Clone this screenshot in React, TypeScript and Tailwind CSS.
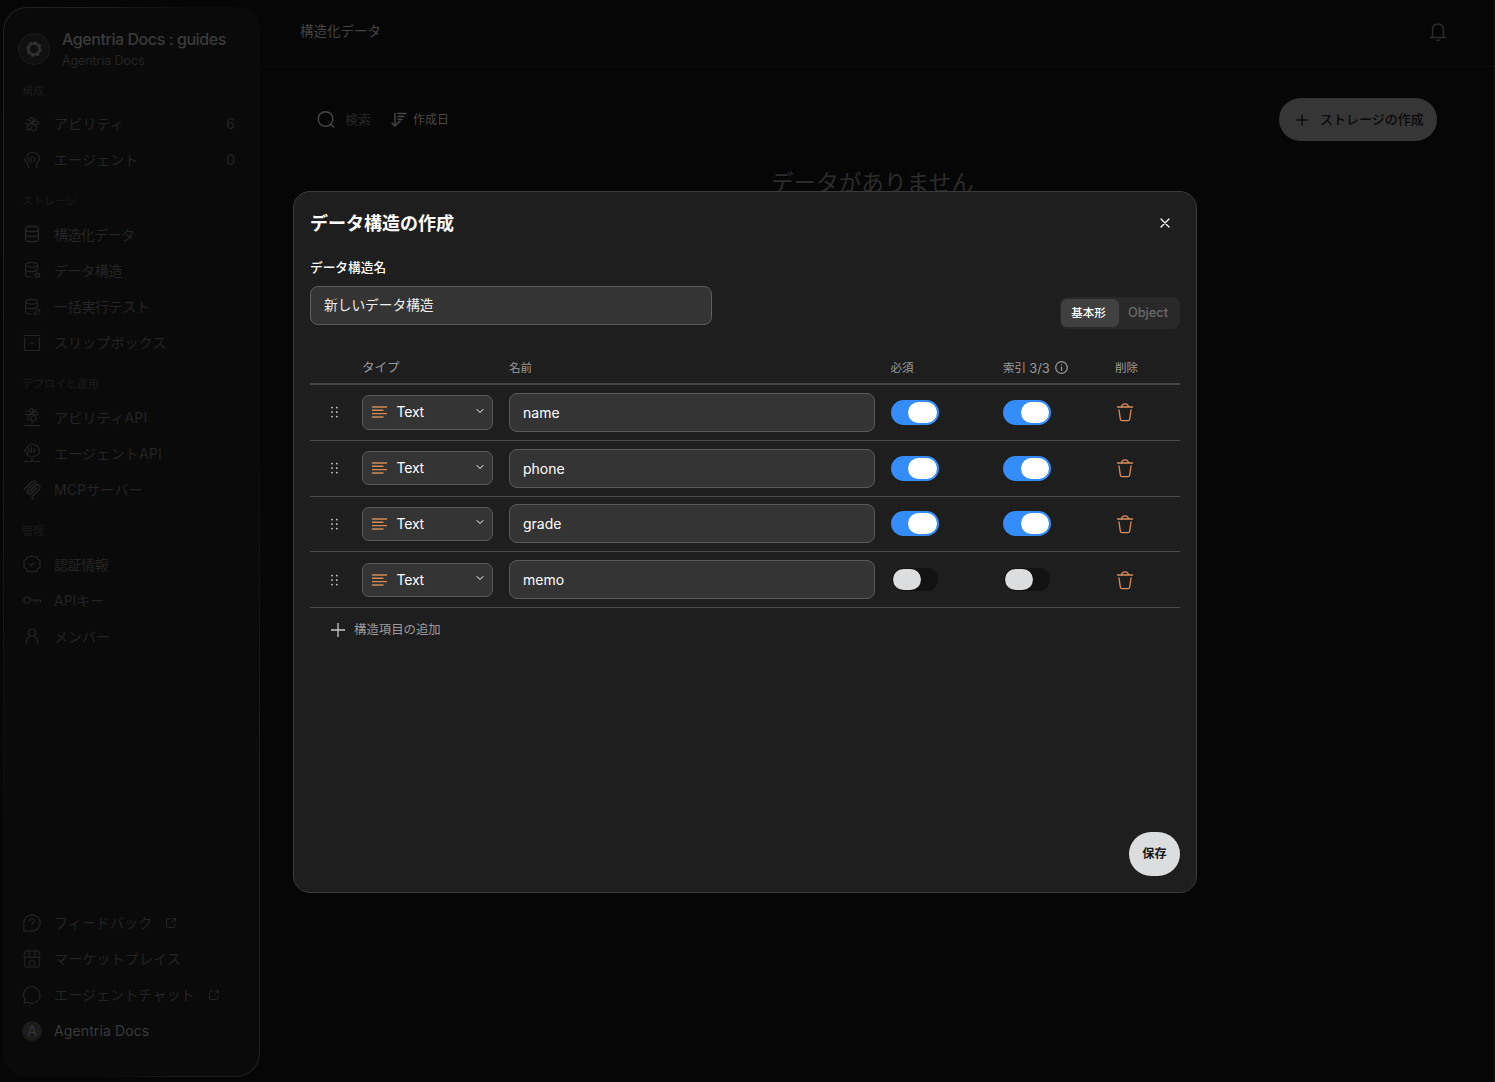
import type { ReactNode } from "react";

function Svg({ children, size = 20, width = 1.2, box = 20, className = "" }: { children: ReactNode; size?: number; width?: number; box?: number; className?: string }) {
  return (
    <svg width={size} height={size} viewBox={`0 0 ${box} ${box}`} fill="none" stroke="currentColor" strokeWidth={width} strokeLinecap="round" strokeLinejoin="round" className={`shrink-0 ${className}`}>
      {children}
    </svg>
  );
}

const brain = (
  <>
    <path d="M10.500 9C7.500 7.500 7.500 4.500 9.500 3.500C10.500 3 11.500 3.500 11.500 5L10.500 9L14 4.500" />
    <path d="M10.500 9C7.500 10.500 5 9.500 3 9.500M4.500 6C6 5 8 6.500 10.500 9" />
    <path d="M10.500 9C12 7 14.500 6.500 16 7.500C17.500 9 16.500 10.500 15 10.500C13 10.500 12 9.500 10.500 9" />
    <path d="M10 9.500C7.500 10.500 5.200 12.200 5 14.200C5 16.200 7.500 16.300 8.500 14.800" />
    <path d="M11 10C13.500 11 15.500 13 14.500 15C13.500 17.300 10.500 17.500 9.500 15.500C8.800 14 9.500 12.500 10.500 12" />
  </>
);
const dbTop = (
  <>
    <ellipse cx="9.500" cy="4.700" rx="6" ry="2.300" />
    <path d="M3.500 4.700V9.300C3.500 10.600 6 11.600 9 11.700M15.500 4.700V9" />
    <path d="M3.500 9.300V14.500C3.500 16 6 17 9 17M9 11.700C12 11.700 15 11 15.500 9" />
  </>
);

const icons: Record<string, ReactNode> = {
  ability: <Svg>{brain}</Svg>,
  agent: (
    <Svg>
      <path d="M6.500 17.500C6.500 15.500 5 14 5 12M5 6.500C5.800 3.800 8 2.500 10.700 2.500C14.700 2.500 17.300 5.300 17.300 8.500C17.300 11.800 14.500 12.800 14.500 15V17.500M4 8.500L2.500 10L4 11.500M7 7.500L6.500 11.500M10 6.500L8.800 12.500M12 7.500L13 9.500L11.500 11.500" />
    </Svg>
  ),
  db: (
    <Svg width={1.3}>
      <rect x="3.500" y="2.500" width="13" height="5" rx="2.500" />
      <path d="M3.500 5V15C3.500 16.500 5 17.500 7 17.500H13C15 17.500 16.500 16.500 16.500 15V5M3.500 9.500Q3.700 12.300 7 12.300H13Q16.300 12.300 16.500 9.500" />
    </Svg>
  ),
  dbLock: <Svg>{dbTop}<rect x="13.500" y="13.500" width="4" height="3.500" rx="1" strokeWidth="1.600" /></Svg>,
  dbSync: <Svg>{dbTop}<path d="M12.300 14C13 12 16.500 11.800 17.700 14M17.900 12V14H16M18 15.800C17.300 18 14 18.200 12.600 16M12.400 18V16H14.200" strokeWidth="1" /></Svg>,
  box: <Svg><path d="M2 2.500H18M2.500 5V17.500H17.500V5M8.500 10H11.500" /></Svg>,
  abilityApi: (
    <Svg>
      <g transform="translate(.5 -1.500) scale(.92)">{brain}</g>
      <path d="M10 14V18M2.500 18.500H17.500" />
    </Svg>
  ),
  agentApi: (
    <Svg>
      <path d="M5 5C6 2.500 8.300 1.500 10.800 1.500C14.500 1.500 17.300 4.300 17.300 7.500C17.300 10.500 15 13 11.500 13.500M5 9.500C5 11.500 6 13 8 13.500M4 6L2.500 7.500L4 9M7 5L6.500 9M9.500 4L9 10M12 5.500L13 7.500L11.500 9M10 13.500V18.500M2.500 18.500H17.500" />
    </Svg>
  ),
  mcp: (
    <Svg box={180} width={13}>
      <path d="M18 84.853L85.882 16.971C95.255 7.598 110.451 7.598 119.823 16.971C129.196 26.343 129.196 41.539 119.823 50.912L68.558 102.177" />
      <path d="M69.265 101.47L119.823 50.912C129.196 41.539 144.392 41.539 153.765 50.912L154.118 51.265C163.491 60.638 163.491 75.834 154.118 85.206L92.725 146.6C89.601 149.724 89.601 154.789 92.725 157.913L105.331 170.52" />
      <path d="M102.853 33.941L52.648 84.146C43.276 93.518 43.276 108.714 52.648 118.087C62.021 127.459 77.217 127.459 86.589 118.087L136.794 67.882" />
    </Svg>
  ),
  badge: (
    <Svg>
      <path d="M10 1.500L12.300 3L15 2.900L16 5.300L18.300 7L17.700 10L18.300 13L16 14.700L15 17.100L12.300 17L10 18.500L7.700 17L5 17.100L4 14.700L1.700 13L2.300 10L1.700 7L4 5.300L5 2.900L7.700 3Z" />
      <path d="M7.500 9.800L9.300 11.500L12.700 8.300" />
    </Svg>
  ),
  key: <Svg><circle cx="5" cy="10" r="3.200" /><path d="M8.200 10H18.500V12M13.500 10V12M16 10V11.500" /></Svg>,
  user: <Svg><circle cx="10" cy="6.500" r="3.500" /><path d="M4.200 17C4.200 13.500 6.200 11 8.500 9.800M15.800 17C15.800 13.500 13.800 11 11.500 9.800" /></Svg>,
  help: (
    <Svg>
      <path d="M1.800 18.200V10A8.200 8.200 0 1 1 10 18.200Z" />
      <path d="M7.500 7.700C7.700 4.700 12.500 4.900 12.300 7.800C12.200 9.600 10 9.800 10 11.500M10 14V14.200" />
    </Svg>
  ),
  store: (
    <Svg width={1.1}>
      <path d="M3.500 2H16.500L18 6.500Q18 8.500 15.700 8.500Q13.300 8.500 13 6.500Q13 8.500 10 8.500Q7 8.500 7 6.500Q6.700 8.500 4.300 8.500Q2 8.500 2 6.500ZM7.300 2L7 6.500M12.700 2L13 6.500M2.700 9V16.200Q2.700 18 4.500 18H15.500Q17.300 18 17.300 16.200V9M7.500 18V13.500Q7.500 11.500 10 11.500T12.500 13.500V18" />
    </Svg>
  ),
  chat: <Svg><path d="M1.800 18.200L3 14.500A8.200 8.200 0 1 1 6 17.200Z" /></Svg>,
};

function Item({ icon, label, count, external, tracking = "" }: { icon: string; label: string; count?: string; external?: boolean; tracking?: string }) {
  return (
    <div className="flex h-[36.150px] items-center pl-[18px] pr-6">
      {icons[icon]}
      <span className={`ml-3 whitespace-nowrap ${tracking}`}>{label}</span>
      {external && (
        <Svg size={12} box={12} width={1} className="ml-[13px]">
          <path d="M5 2H3Q1.500 2 1.500 3.500V9Q1.500 10.500 3 10.500H8.500Q10 10.500 10 9V7M7.500 1.500H10.500V4.500M10.500 1.500L6 6" />
        </Svg>
      )}
      {count && <span className="ml-auto">{count}</span>}
    </div>
  );
}

function Section({ title, children }: { title: string; children: ReactNode }) {
  return (
    <section>
      <h2 className="flex h-[38.400px] items-center pl-[18px] pt-[9px] text-[11px] font-normal text-[#1b1b1b]">{title}</h2>
      {children}
    </section>
  );
}

function Sidebar() {
  return (
    <aside className="ml-[3px] mt-[7px] h-[1070px] w-[257px] shrink-0 rounded-[24px] bg-[linear-gradient(to_bottom_right,#222_0%,#1e1e1e_20%,#0a0a0a_38%,#0a0a0a_70%,#1c1c1c_84%,#202020_100%)] p-px">
      <div className="flex h-full flex-col rounded-[23px] bg-[#0a0a0a] text-[14px] text-[#242424]">
        <div className="flex h-[59.200px] items-center gap-3 pl-[14px] pt-[23px]">
          <div className="flex h-8 w-8 items-center justify-center rounded-full border border-[#1c1c1c] bg-[#101010] text-[#303030]">
            <Svg size={18} box={18} width={2.4}>
              <circle cx="9" cy="9" r="5.500" />
              <circle cx="9" cy="9" r="7" strokeWidth="1.500" strokeDasharray="2.500 3" />
            </Svg>
          </div>
          <div className="whitespace-nowrap pt-[2px]">
            <div className="text-[16px] leading-[21px] font-medium tracking-[-0.430px] text-[#3b3b3b]">Agentria Docs : guides</div>
            <div className="text-[12.500px] leading-[21px] tracking-[-0.100px] text-[#242424]">Agentria Docs</div>
          </div>
        </div>
        <Section title="構成">
          <Item icon="ability" label="アビリティ" count="6" tracking="tracking-[0.200px]" />
          <Item icon="agent" label="エージェント" count="0" tracking="tracking-[0.100px]" />
        </Section>
        <Section title="ストレージ">
          <Item icon="db" label="構造化データ" tracking="tracking-[-0.600px]" />
          <Item icon="dbLock" label="データ構造" tracking="tracking-[-0.400px]" />
          <Item icon="dbSync" label="一括実行テスト" tracking="tracking-[-0.300px]" />
          <Item icon="box" label="スリップボックス" tracking="tracking-[0.100px]" />
        </Section>
        <Section title="デプロイと運用">
          <Item icon="abilityApi" label="アビリティAPI" tracking="tracking-[0.250px]" />
          <Item icon="agentApi" label="エージェントAPI" tracking="tracking-[0.200px]" />
          <Item icon="mcp" label="MCPサーバー" tracking="tracking-[0.150px]" />
        </Section>
        <Section title="管理">
          <Item icon="badge" label="認証情報" tracking="tracking-[-0.500px]" />
          <Item icon="key" label="APIキー" />
          <Item icon="user" label="メンバー" />
        </Section>
        <div className="mt-auto pb-[27px]">
          <Item icon="help" label="フィードバック" external tracking="tracking-[0.100px]" />
          <Item icon="store" label="マーケットプレイス" tracking="tracking-[0.150px]" />
          <Item icon="chat" label="エージェントチャット" external tracking="tracking-[0.100px]" />
          <div className="flex h-[36.150px] items-center pl-[18px] text-[#3a3a3a]">
            <span className="flex h-5 w-5 items-center justify-center rounded-full bg-[#1c1c1c] text-[14px] text-[#363636]">A</span>
            <span className="ml-3 tracking-[0.120px]">Agentria Docs</span>
          </div>
        </div>
      </div>
    </aside>
  );
}

function Page() {
  return (
    <main className="flex min-w-0 flex-1 flex-col border-r border-[#161616]">
      <header className="flex h-[67px] items-center justify-between border-b border-[#0c0c0c] pl-[40px] pr-[46px] text-[13.500px] text-[#444]">
        <span className="relative -top-[2px]">構造化データ</span>
        <Svg className="relative -top-px text-[#2d2d2d]" width={1.4}>
          <path d="M2.500 15.500H17.500M4 15.500C4.800 13.500 4.500 12 4.500 9C4.500 4.500 6.500 2 10 2S15.500 4.500 15.500 9C15.500 12 15.200 13.500 16 15.500M8.500 18C9.200 18.700 10.800 18.700 11.500 18" />
        </Svg>
      </header>
      <div className="mt-[31px] flex h-[43px] items-center pl-[56px] pr-[57px] text-[13px]">
        <Svg className="text-[#484848]" width={1.4}>
          <circle cx="9.500" cy="9" r="7.300" />
          <path d="M15 14.500L17.800 17.300" />
        </Svg>
        <span className="ml-[9px] text-[#262626]">検索</span>
        <Svg size={16} box={16} className="ml-5 text-[#484848]" width={1.4}>
          <path d="M4 1.500V14M1 11L4 14L7 11M7 1.500H15M7 4.500H13M7 7.500H11M7 10H9" />
        </Svg>
        <span className="ml-[6px] text-[12px] text-[#484848]">作成日</span>
        <button className="ml-auto flex h-[43px] w-[158px] items-center rounded-full bg-[#363636] pl-[17px] text-[13px] font-medium text-[#0a0a0a]">
          <Svg size={12} box={12} width={1.3}><path d="M6 .800V11.200M.800 6H11.200" /></Svg>
          <span className="ml-[12px] whitespace-nowrap">ストレージの作成</span>
        </button>
      </div>
      <p className="mt-[26px] pl-[511px] text-[22.600px] leading-[32px] text-[#2c2c2c]">データがありません</p>
    </main>
  );
}

function Switch({ on }: { on: boolean }) {
  return on ? (
    <div className="flex h-[25px] w-[48px] items-center justify-end rounded-full bg-[#348cf8] pr-[2px]">
      <div className="h-[21px] w-[28.500px] rounded-full bg-white" />
    </div>
  ) : (
    <div className="flex h-[25px] w-[48px] items-center pl-px">
      <div className="flex h-[23px] w-[46px] items-center rounded-full bg-[#121212] pl-px">
        <div className="h-[21px] w-[28px] rounded-full bg-[#dcdddf]" />
      </div>
    </div>
  );
}

const columns = "grid grid-cols-[52px_147px_381.500px_112.500px_112px_1fr] items-center";
const fields = [
  { name: "name", on: true },
  { name: "phone", on: true },
  { name: "grade", on: true },
  { name: "memo", on: false },
];

function FieldRow({ name, on }: { name: string; on: boolean }) {
  return (
    <div className={`${columns} h-[55.800px] border-b border-[#4c4c4c]`}>
      <svg width="10" height="12" viewBox="0 0 10 12" fill="#c9c9c9" className="ml-[20px]">
        {[1.5, 6, 10.5].map((y) => [1.9, 6.7].map((x) => <rect key={`${x}-${y}`} x={x - 0.8} y={y - 0.8} width="1.700" height="1.700" rx=".6" />))}
      </svg>
      <div className="flex h-[34.500px] w-[131px] items-center rounded-[7px] border border-[#5a5a5a] bg-[#343434] pl-[9px] pr-2 text-[14px] text-white">
        <svg width="15" height="12" viewBox="0 0 15 12" stroke="#d08a54" strokeWidth="1.400" className="shrink-0">
          <path d="M0 1H15M0 4.300H11.500M0 7.600H15M0 11H11.500" />
        </svg>
        <span className="relative -top-[0.700px] ml-[9.500px] tracking-[-0.200px]">Text</span>
        <Svg size={8} box={8} width={1} className="relative -top-[1.500px] ml-auto"><path d="M1 2.500L4 5.500L7 2.500" /></Svg>
      </div>
      <div className="flex h-[39px] w-[365.500px] items-center rounded-lg border border-[#5a5a5a] bg-[#343434] pl-[13px] text-[14px] text-white">{name}</div>
      <Switch on={on} />
      <Switch on={on} />
      <Svg width={1.3} className="text-[#d99058]">
        <path d="M2.500 5H17.500M6.500 4.800C6.700 3.200 8 1.800 10 1.800S13.300 3.200 13.500 4.800M4 8L5.300 17Q5.600 18.700 7 18.700H13Q14.400 18.700 14.700 17L16 8" />
      </Svg>
    </div>
  );
}

function Modal() {
  return (
    <div className="absolute left-[293px] top-[191px] flex h-[702px] w-[904px] flex-col rounded-[17px] border border-[#3a3a3a] bg-[#1e1e1e] px-4 text-white">
      <div className="flex h-[62px] items-center justify-between pr-[10px]">
        <h1 className="text-[18px] font-bold">データ構造の作成</h1>
        <Svg size={10} box={10} width={1.3}><path d="M1 1L9 9M9 1L1 9" /></Svg>
      </div>
      <div className="flex h-[76px] justify-between">
        <div className="pt-[5px]">
          <div className="text-[12.700px] leading-[18px] font-medium">データ構造名</div>
          <div className="mt-[9px] flex h-[39px] w-[402px] items-center rounded-lg border border-[#5e5e5e] bg-[#343434] pl-[13px] text-[13.700px] text-[#eee]">新しいデータ構造</div>
        </div>
        <div className="mb-px flex h-[32px] w-[120px] items-center self-end rounded-lg bg-[#292929] p-[2px] pl-px text-[12.500px]">
          <span className="flex h-[28px] w-[58px] items-center justify-center rounded-md bg-[#404040] pr-[3px] pt-px text-[11.500px] font-medium">基本形</span>
          <span className="flex-1 pr-px text-center text-[12.800px] font-medium text-[#6a6a6a]">Object</span>
        </div>
      </div>
      <div className={`${columns} h-[55px] border-b-2 border-[#484848] pt-[24px] text-[12.500px] whitespace-nowrap text-[#9a9a9a]`}>
        <span />
        <span>タイプ</span>
        <span className="text-[11.500px]">名前</span>
        <span className="text-[11.500px]">必須</span>
        <span className="flex items-center text-[11.500px]">
          索引&nbsp;<span className="text-[12.900px]">3/3</span>
          <Svg size={14} box={14} className="relative -top-px ml-1"><circle cx="7.500" cy="7.500" r="5.800" /><path d="M7.500 7V10.300M7.500 4.700V4.800" /></Svg>
        </span>
        <span className="text-[11.500px]">削除</span>
      </div>
      {fields.map((f) => <FieldRow key={f.name} {...f} />)}
      <div className="flex h-[44px] items-center pl-[21px] text-[12.400px] text-[#9a9a9a]">
        <Svg size={14} box={14} width={1.3} className="text-[#c8c8c8]"><path d="M7 0V14M0 7H14" /></Svg>
        <span className="ml-[9px]">構造項目の追加</span>
      </div>
      <button className="mb-4 mt-auto flex h-[44px] w-[51px] items-center justify-center self-end rounded-full bg-[#dcdddf] pt-px text-[12.200px] font-bold text-[#181818]">保存</button>
    </div>
  );
}

export default function App() {
  return (
    <div className="relative flex h-[1082px] w-[1495px] overflow-hidden bg-[#060606] font-['Inter','Noto_Sans_CJK_JP',sans-serif]">
      <Sidebar />
      <Page />
      <Modal />
    </div>
  );
}
